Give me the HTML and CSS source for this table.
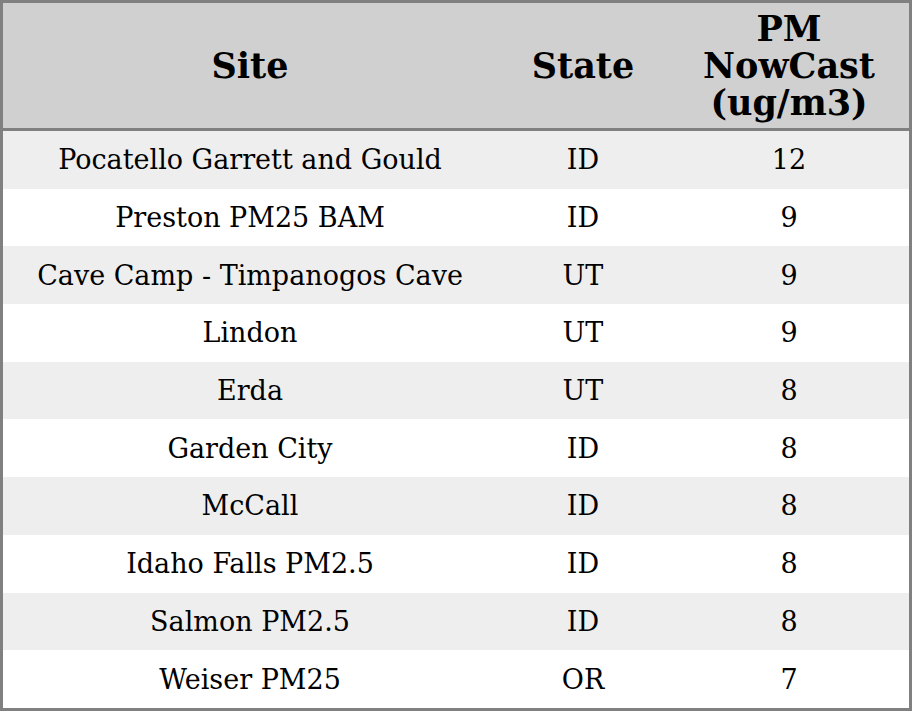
FILE: index.html
```html
<!DOCTYPE html>
<html>
<head>
<meta charset="utf-8">
<link rel="stylesheet" href="styles.css">
</head>
<body>
<table class="aq">
  <colgroup>
    <col class="c-site">
    <col class="c-state">
    <col class="c-pm">
  </colgroup>
  <thead>
    <tr><th>Site</th><th>State</th><th>PM<br>NowCast<br>(ug/m3)</th></tr>
  </thead>
  <tbody>
    <tr><td>Pocatello Garrett and Gould</td><td>ID</td><td>12</td></tr>
    <tr><td>Preston PM25 BAM</td><td>ID</td><td>9</td></tr>
    <tr><td>Cave Camp - Timpanogos Cave</td><td>UT</td><td>9</td></tr>
    <tr><td>Lindon</td><td>UT</td><td>9</td></tr>
    <tr><td>Erda</td><td>UT</td><td>8</td></tr>
    <tr><td>Garden City</td><td>ID</td><td>8</td></tr>
    <tr><td>McCall</td><td>ID</td><td>8</td></tr>
    <tr><td>Idaho Falls PM2.5</td><td>ID</td><td>8</td></tr>
    <tr><td>Salmon PM2.5</td><td>ID</td><td>8</td></tr>
    <tr><td>Weiser PM25</td><td>OR</td><td>7</td></tr>
  </tbody>
</table>
</body>
</html>
```

FILE: styles.css
```css
html, body {
  margin: 0;
  padding: 0;
  background: #ffffff;
}
.aq {
  width: 912px;
  box-sizing: border-box;
  border-collapse: separate;
  border-spacing: 0;
  border: 3px solid #808080;
  font-family: "DejaVu Serif", serif;
  color: #000;
  table-layout: fixed;
}
.c-site { width: 494px; }
.c-state { width: 172px; }
.c-pm { width: 240px; }
.aq th {
  background: #d0d0d0;
  font-size: 35px;
  font-weight: bold;
  line-height: 37px;
  height: 125px;
  padding: 0;
  text-align: center;
  vertical-align: middle;
  border-bottom: 3px solid #808080;
}
.aq td {
  font-size: 27px;
  height: 57.7px;
  padding: 0;
  text-align: center;
  vertical-align: middle;
}
.aq tbody tr:nth-child(odd) td {
  background: #eeeeee;
}
```
